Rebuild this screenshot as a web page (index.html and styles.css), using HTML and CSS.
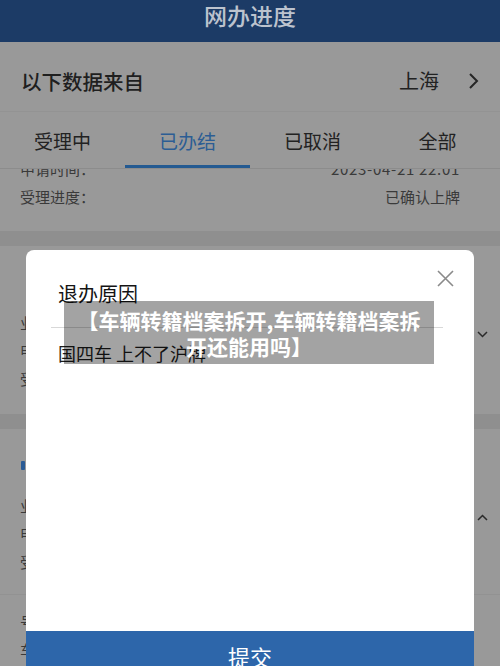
FILE: index.html
```html
<!DOCTYPE html>
<html lang="zh-CN">
  <head>
    <meta charset="UTF-8" />
    <title>网办进度</title>
    <link rel="stylesheet" href="styles.css">
  </head>
  <body>
    <header class="topbar">
      <h1>网办进度</h1>
    </header>

    <div class="source">
      <span class="source-label">以下数据来自</span>
      <span class="source-city">上海</span>
      <svg class="source-arrow" width="12" height="18" viewBox="0 0 12 18">
        <polyline points="2,2 9,9 2,16" fill="none" stroke="#262626" stroke-width="2" />
      </svg>
    </div>

    <nav class="tabs">
      <a class="tab">受理中</a>
      <a class="tab tab-active">已办结</a>
      <a class="tab">已取消</a>
      <a class="tab">全部</a>
    </nav>

    <section class="list">
      <div class="card card-first">
        <div class="row"><span>申请时间：</span><span class="row-value row-date">2023-04-21 22:01</span></div>
        <div class="row"><span>受理进度：</span><span class="row-value">已确认上牌</span></div>
      </div>

      <div class="card">
        <div class="card-head"><i class="card-mark card-mark-off"></i><span class="card-title">转籍业务</span></div>
        <div class="row row-toggle">
          <span>业务类型：</span><span class="row-value">转籍</span>
          <svg class="toggle" width="11" height="7" viewBox="0 0 11 7">
            <polyline points="1,1 5.5,5.5 10,1" fill="none" stroke="#2a2a2a" stroke-width="1.5" />
          </svg>
        </div>
        <div class="row"><span>申请时间：</span><span class="row-value row-date">2023-04-18 10:12</span></div>
        <div class="row"><span>受理进度：</span><span class="row-value">已退办</span></div>
      </div>

      <div class="card">
        <div class="card-head"><i class="card-mark"></i><span class="card-title">转籍业务</span></div>
        <div class="row row-toggle">
          <span>业务类型：</span><span class="row-value">转籍</span>
          <svg class="toggle" width="11" height="7" viewBox="0 0 11 7">
            <polyline points="1,6 5.5,1.5 10,6" fill="none" stroke="#2a2a2a" stroke-width="1.5" />
          </svg>
        </div>
        <div class="row"><span>申请时间：</span><span class="row-value row-date">2023-04-15 09:40</span></div>
        <div class="row"><span>受理进度：</span><span class="row-value">已退办</span></div>
        <div class="card-more">
          <div class="row"><span>号牌号码：</span><span class="row-value">沪A·****</span></div>
          <div class="row"><span>车辆类型：</span><span class="row-value">小型轿车</span></div>
        </div>
      </div>
    </section>

    <div class="dialog">
      <div class="dialog-head">
        <h2>退办原因</h2>
        <svg class="dialog-close" width="17" height="17" viewBox="0 0 17 17">
          <path d="M1 1L16 16M16 1L1 16" stroke="#8a8a8a" stroke-width="1.6" />
        </svg>
      </div>
      <div class="dialog-line"></div>
      <p class="dialog-text">国四车 上不了沪牌</p>
      <button class="dialog-submit">提交</button>
    </div>

    <div class="caption">【车辆转籍档案拆开,车辆转籍档案拆开还能用吗】</div>
  </body>
</html>
```

FILE: styles.css
```css
body {
  margin: 0;
  width: 500px;
  height: 666px;
  overflow: hidden;
  position: relative;
  font-family: "Noto Sans CJK SC", "Noto Sans", sans-serif;
  background-color: #999;
  color: #1f1f1f;
}

/* page behind the dialog is drawn in its dimmed colours */

.topbar {
  height: 42px;
  background-color: #1c3b66;
}

.topbar h1 {
  margin: 0;
  font-size: 23px;
  font-weight: 500;
  line-height: 30px;
  text-align: center;
  color: #bcc3ce;
}

.source {
  height: 70px;
  padding: 8px 20px 0 21px;
  box-sizing: border-box;
  display: flex;
  align-items: center;
  border-bottom: 1px solid #939393;
}

.source-label {
  font-size: 20.5px;
  font-weight: 500;
}

.source-city {
  margin-left: auto;
  font-size: 20px;
  color: #222;
}

.source-arrow {
  margin-left: 29px;
}

.tabs {
  height: 57px;
  display: grid;
  grid-template-columns: repeat(4, 1fr);
  border-bottom: 1px solid #8c8c8c;
  box-sizing: border-box;
  position: relative;
  z-index: 1;
  background-color: #999;
}

.tab {
  display: flex;
  align-items: center;
  justify-content: center;
  font-size: 19px;
  color: #222;
  border-bottom: 3px solid transparent;
  padding-top: 3px;
}

.tab-active {
  color: #2c5d94;
  border-bottom-color: #245a91;
}

.list {
  background-color: #8f8f8f;
}

.card {
  background-color: #999;
  margin-bottom: 15px;
  padding-bottom: 22px;
}

.card-first {
  margin-top: -15px;
  padding-bottom: 21px;
}

.card-head {
  height: 62px;
  display: flex;
  align-items: center;
  padding: 10px 20px 0 21px;
  box-sizing: border-box;
}

.card-title {
  font-size: 16px;
  color: #2a2a2a;
}

.card-mark {
  width: 4px;
  height: 9px;
  border-radius: 1px;
  background-color: #2a5b96;
  margin-right: 10px;
}

.card-mark-off {
  visibility: hidden;
}

.row {
  height: 28px;
  display: flex;
  align-items: center;
  padding: 0 40px 0 20px;
  font-size: 15px;
  color: #3a3a3a;
}

.row-value {
  margin-left: auto;
}

.row-date {
  letter-spacing: 0.7px;
}

.row-toggle {
  padding-right: 12px;
}

.toggle {
  align-self: flex-end;
  margin: 0 0 -2px 17px;
}

.card-more {
  margin-top: 19px;
  padding-top: 12px;
  border-top: 1px solid #929292;
}

.dialog {
  position: absolute;
  left: 26px;
  top: 250px;
  width: 448px;
  height: 431px;
  background-color: #fff;
  border-radius: 8px 8px 0 0;
  display: flex;
  flex-direction: column;
  overflow: hidden;
}

.dialog-head {
  display: flex;
  justify-content: space-between;
  align-items: flex-start;
  padding: 20px 20px 0 32px;
}

.dialog-head h2 {
  margin: 10px 0 0;
  font-size: 20px;
  font-weight: 400;
  line-height: 28px;
  color: #141414;
}

.dialog-line {
  height: 1px;
  margin: 19px 31px 0 25px;
  background-color: #d8d8d8;
}

.dialog-text {
  margin: 12px 0 0 32px;
  font-size: 18px;
  line-height: 26px;
  color: #1c1c1c;
}

.dialog-submit {
  margin-top: auto;
  height: 50px;
  border: none;
  background-color: #2d66aa;
  color: #fff;
  font-family: inherit;
  font-size: 22px;
}

.caption {
  position: absolute;
  left: 64px;
  top: 301px;
  width: 370px;
  height: 63px;
  padding: 6px 10px;
  box-sizing: border-box;
  background-color: rgba(0, 0, 0, 0.36);
  color: #fff;
  font-size: 21px;
  font-weight: 700;
  line-height: 26px;
  text-align: center;
}
```
